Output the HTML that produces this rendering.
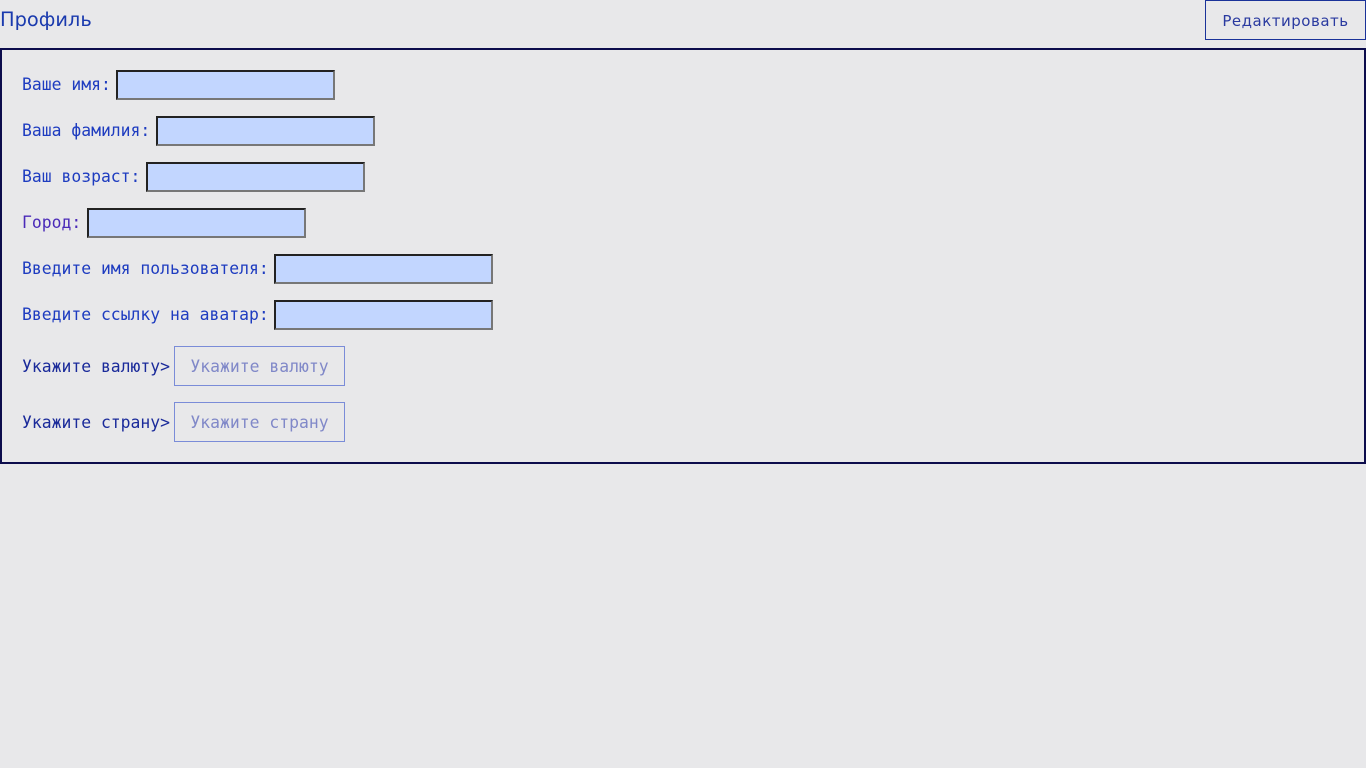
<!DOCTYPE html>
<html><head><meta charset="utf-8"><style>
body{margin:0;width:1366px;height:768px;background:#e8e8ea;position:relative;overflow:hidden;font-family:"DejaVu Sans",sans-serif}
.t{position:absolute;left:0;top:8px;font-size:19.4px;color:#1a3aae}
.eb{position:absolute;left:1205px;top:0;width:159px;height:38px;border:1px solid #1a3299;box-sizing:content-box;font-size:15px;color:#2a3aa0;text-align:center;line-height:40px;letter-spacing:0.5px}
.box{position:absolute;left:0;top:48px;width:1362px;height:412px;border:2px solid #0c0c4c}
.l{position:absolute;left:22px;font-family:"DejaVu Sans Mono",monospace;font-size:16.4px;color:#1e3cc0;white-space:pre}
.i{position:absolute;width:215px;height:26px;background:#c2d6ff;border:2px solid;border-color:#222 #777 #777 #222}
.b{position:absolute;left:174px;width:169px;height:38px;border:1px solid #7a8cd8;font-family:"DejaVu Sans Mono",monospace;font-size:16.4px;color:#8088c8;text-align:center;line-height:40px}
</style></head><body>
<div class="t">Профиль</div>
<div class="eb">Редактировать</div>
<div class="box"></div>
<div class="l" style="top:75px">Ваше имя:</div><div class="i" style="left:116px;top:70px"></div>
<div class="l" style="top:121px">Ваша фамилия:</div><div class="i" style="left:156px;top:116px"></div>
<div class="l" style="top:167px">Ваш возраст:</div><div class="i" style="left:146px;top:162px"></div>
<div class="l" style="top:213px;color:#4a2ab8">Город:</div><div class="i" style="left:87px;top:208px"></div>
<div class="l" style="top:259px">Введите имя пользователя:</div><div class="i" style="left:274px;top:254px"></div>
<div class="l" style="top:305px">Введите ссылку на аватар:</div><div class="i" style="left:274px;top:300px"></div>
<div class="l" style="top:357px;color:#1a2a9a">Укажите валюту&gt;</div><div class="b" style="top:346px">Укажите валюту</div>
<div class="l" style="top:413px;color:#1a2a9a">Укажите страну&gt;</div><div class="b" style="top:402px">Укажите страну</div>
</body></html>
